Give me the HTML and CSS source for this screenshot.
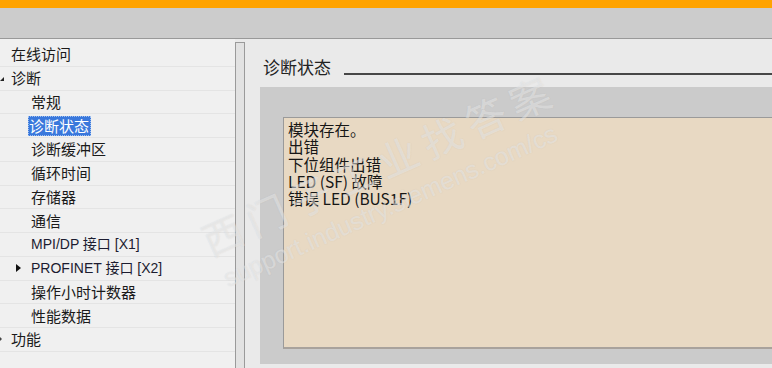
FILE: index.html
```html
<!DOCTYPE html>
<html>
<head>
<meta charset="utf-8">
<link rel="stylesheet" href="styles.css">
</head>
<body>
<div class="topbar"></div>
<div class="toolbar"></div>
<div class="main">
  <div class="tree">
    <div class="row lvl0"><span class="tw"></span><span class="lbl">在线访问</span></div>
    <div class="row lvl0"><span class="tw"><svg class="open" width="4" height="4" viewBox="0 0 4 4"><polygon points="4,0 4,4 0,4" fill="#222"/></svg></span><span class="lbl">诊断</span></div>
    <div class="row lvl1"><span class="tw"></span><span class="lbl">常规</span></div>
    <div class="row lvl1"><span class="tw"></span><span class="lbl sel">诊断状态</span></div>
    <div class="row lvl1"><span class="tw"></span><span class="lbl">诊断缓冲区</span></div>
    <div class="row lvl1"><span class="tw"></span><span class="lbl">循环时间</span></div>
    <div class="row lvl1"><span class="tw"></span><span class="lbl">存储器</span></div>
    <div class="row lvl1"><span class="tw"></span><span class="lbl">通信</span></div>
    <div class="row lvl1"><span class="tw"></span><span class="lbl lat">MPI/DP 接口 [X1]</span></div>
    <div class="row lvl1"><span class="tw"><svg class="closed" width="6" height="8" viewBox="0 0 6 8"><polygon points="0,0 5,4 0,8" fill="#111"/></svg></span><span class="lbl lat">PROFINET 接口 [X2]</span></div>
    <div class="row lvl1"><span class="tw"></span><span class="lbl">操作小时计数器</span></div>
    <div class="row lvl1"><span class="tw"></span><span class="lbl">性能数据</span></div>
    <div class="row lvl0"><span class="tw"><svg class="cut" width="2" height="4" viewBox="0 0 2 4"><polygon points="0,0 2,2 0,4" fill="#444"/></svg></span><span class="lbl">功能</span></div>
  </div>
  <div class="splitter"></div>
  <div class="content">
    <div class="heading">
      <span class="htext">诊断状态</span>
      <span class="hline"></span>
    </div>
    <div class="graybox">
      <div class="status">
        <div>模块存在。</div>
        <div>出错</div>
        <div>下位组件出错</div>
        <div>LED (SF) 故障</div>
        <div>错误 LED (BUS1F)</div>
      </div>
    </div>
  </div>
</div>
<div class="watermark">
  <span class="wm-big">西门子工业找答案</span>
  <span class="wm-url">support.industry.siemens.com/cs</span>
</div>
</body>
</html>
```

FILE: styles.css
```css
html, body {
  margin: 0;
  padding: 0;
}
body {
  width: 772px;
  height: 368px;
  overflow: hidden;
  position: relative;
  font-family: "Noto Sans CJK SC", "Liberation Sans", sans-serif;
  color: #1a1a1a;
  background: #eaeaea;
}
.topbar {
  height: 8px;
  background: #ffa300;
}
.toolbar {
  height: 30px;
  background: #cccccc;
  border-bottom: 1px solid #999999;
}
.main {
  display: flex;
  height: 329px;
}
.tree {
  width: 235px;
  background: #f0f0f0;
  padding-top: 4px;
  box-sizing: border-box;
  overflow: hidden;
}
.row {
  height: 23.75px;
  box-sizing: border-box;
  border-bottom: 1px solid #e4e4e4;
  display: flex;
  align-items: center;
  font-size: 15px;
  line-height: 20px;
  white-space: nowrap;
}
.tw {
  display: inline-flex;
  align-items: center;
  flex: none;
}
.lvl0 .tw { width: 11px; }
.lvl1 .tw { width: 28px; }
.lvl1 .lbl { padding-left: 3px; }
.lvl1 .lbl.sel { padding-left: 1px; margin-left: 0; }
.tw .open { margin-left: 0; margin-top: 2px; }
.tw .closed { margin-left: 16px; }
.tw .cut { margin-left: 0; }
.lbl {
  display: inline-block;
}
.lat {
  font-family: "Liberation Sans", "Noto Sans CJK SC", sans-serif;
  font-size: 14px;
  color: #1c1c30;
}
.sel {
  background: #3a78dc;
  color: #ffffff;
  height: 20px;
  line-height: 20px;
  padding: 0 2px 0 1px;
  outline: 1px dotted #9fc0f0;
  outline-offset: -1px;
}
.splitter {
  width: 8px;
  margin-top: 3px;
  background: #e2e2e2;
  border: 1px solid #9a9a9a;
  border-bottom: none;
  flex: none;
}
.content {
  flex: 1;
  background: #eaeaea;
  padding-left: 15px;
  display: flex;
  flex-direction: column;
  min-width: 0;
}
.heading {
  display: flex;
  align-items: center;
  margin-top: 16px;
  height: 24px;
}
.htext {
  font-size: 17px;
  line-height: 24px;
  padding-left: 3px;
  color: #222;
}
.hline {
  flex: 1;
  height: 0;
  border-bottom: 2px solid #474747;
  margin-left: 13px;
  margin-top: 14px;
}
.graybox {
  margin-top: 8px;
  height: 277px;
  background: #cbcbcb;
  box-sizing: border-box;
  padding: 30px 0 15px 23px;
  display: flex;
}
.status {
  flex: 1;
  background: #e8d9c3;
  border-top: 1px solid #9a9a9a;
  border-left: 1px solid #9a9a9a;
  border-bottom: 2px solid #a8a29c;
  padding: 3px 0 0 4px;
  font-size: 15.5px;
  line-height: 17.3px;
  color: #161616;
}
.watermark {
  position: absolute;
  left: 0;
  top: 0;
  width: 772px;
  height: 368px;
  pointer-events: none;
  overflow: hidden;
}
.wm-big {
  position: absolute;
  left: 212px;
  top: 220px;
  font-size: 40px;
  line-height: 1;
  letter-spacing: 8px;
  white-space: nowrap;
  color: rgba(255, 255, 255, 0.4);
  text-shadow: 0 0 1px rgba(160, 160, 160, 0.3);
  transform: rotate(-24deg);
  transform-origin: 0 100%;
}
.wm-url {
  position: absolute;
  left: 230px;
  top: 266px;
  font-family: "Liberation Sans", sans-serif;
  font-size: 25px;
  line-height: 1;
  white-space: nowrap;
  color: rgba(255, 255, 255, 0.4);
  text-shadow: 0 0 1px rgba(160, 160, 160, 0.3);
  transform: rotate(-24deg);
  transform-origin: 0 100%;
}
```
